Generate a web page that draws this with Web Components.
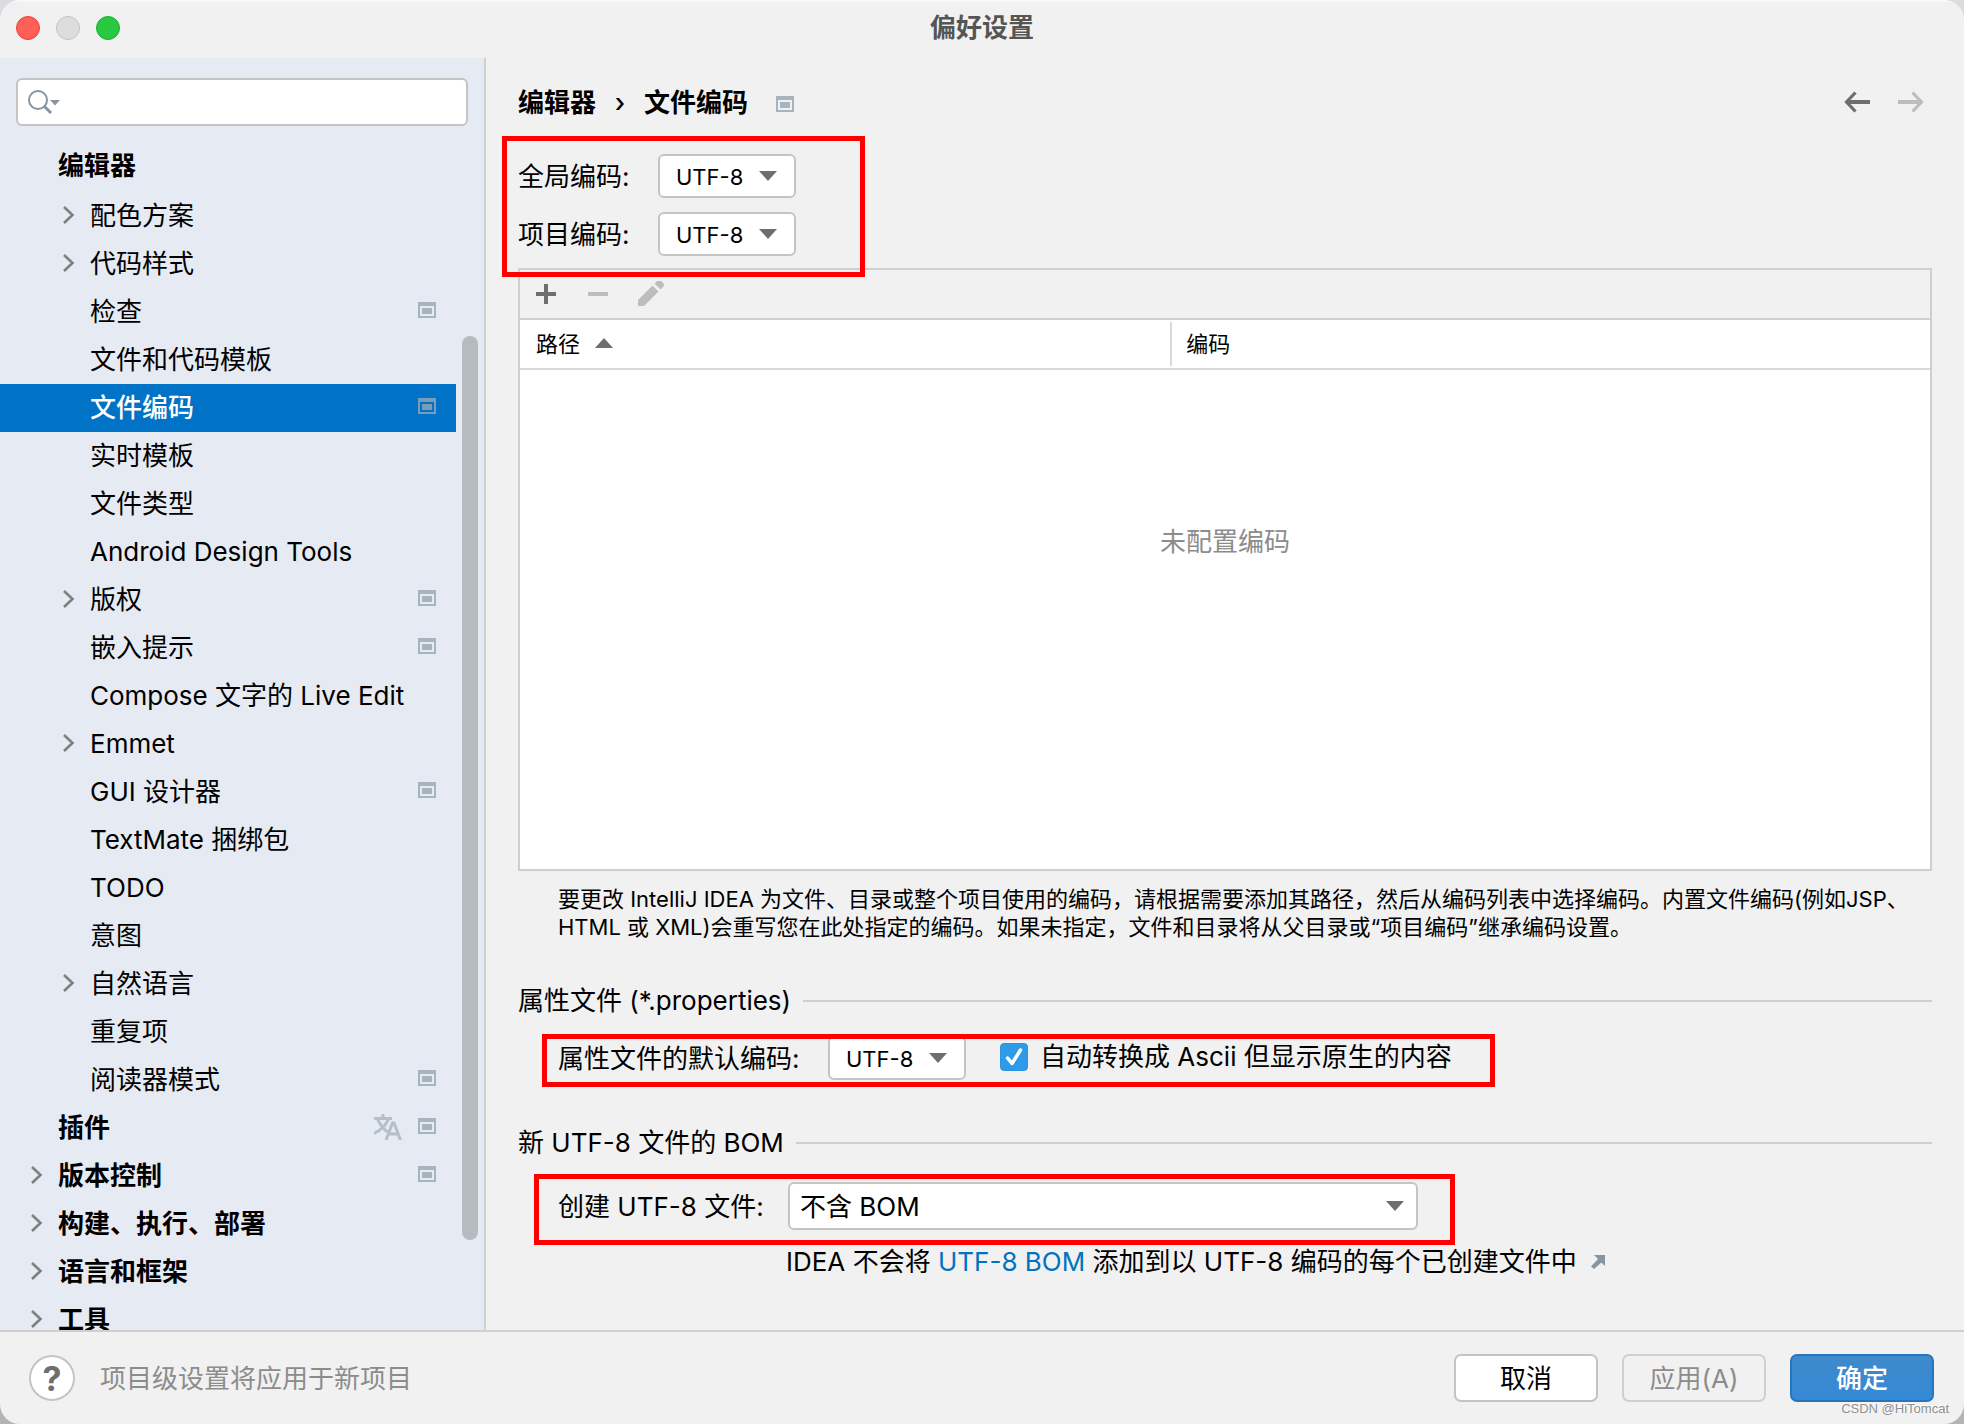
<!DOCTYPE html>
<html lang="zh-CN">
<head>
<meta charset="utf-8">
<title>偏好设置</title>
<style>
  html, body { margin: 0; height: 100%; }
  body {
    background: linear-gradient(#dcdce0, #b4b4b4);
    font: 26px/32px Inter, "Noto Sans CJK SC", sans-serif;
    color: #000;
  }
</style>
</head>
<body>
<prefs-dialog></prefs-dialog>
<script>
const define = (name, html, setup) => {
  const template = document.createElement('template');
  template.innerHTML = html;
  customElements.define(name, class extends HTMLElement {
    constructor() {
      super();
      this.attachShadow({ mode: 'open' }).append(template.content.cloneNode(true));
    }
    connectedCallback() {
      if (setup && !this.ready) { this.ready = true; setup(this, this.shadowRoot); }
    }
  });
};

// Marks a setting that is stored per project
define('project-badge', `
<style>
  :host { display: block; width: 18px; height: 16px; color: #a6b4bf; }
  svg { display: block; }
</style>
<svg width="18" height="16" viewBox="0 0 18 16" fill="currentColor"><path fill-rule="evenodd" d="M0 0h18v16H0zM2 4v10h14V4z"/><path d="M4 6h10v6H4z"/></svg>`);

// Red highlight frame laid over a group of controls
define('highlight-frame', `
<style>
  :host { display: block; position: absolute; border: 5px solid #f00; pointer-events: none; z-index: 2; }
</style>`);

define('title-bar', `
<style>
  :host { display: grid; grid-template-columns: 1fr auto 1fr; align-items: center; height: 56px; padding: 0 16px 2px; box-shadow: inset 0 2px #f9f9f9; }
  .lights { display: flex; gap: 16px; }
  .lights button { width: 24px; height: 24px; padding: 0; border-radius: 50%; border: 1px solid #e2463f; background: #ff5f57; }
  .lights .min { background: #dddddd; border-color: #c3c3c3; }
  .lights .max { background: #28c840; border-color: #1fae34; }
  h1 { margin: 0; font-size: 26px; line-height: 32px; font-weight: 700; color: #555; }
</style>
<div class="lights"><button aria-label="关闭"></button><button class="min" aria-label="最小化"></button><button class="max" aria-label="缩放"></button></div>
<h1><slot></slot></h1>`);

define('search-box', `
<style>
  :host { display: flex; align-items: center; box-sizing: border-box; height: 48px; margin: 20px 16px 0; border: 2px solid #c4c4c4; border-radius: 6px; background: #fff; padding-left: 10px; }
  svg { flex: none; display: block; }
  input { flex: 1; min-width: 0; border: 0; outline: 0; background: none; font: inherit; padding: 0 8px; }
</style>
<svg width="34" height="28" viewBox="0 0 34 28" fill="none" stroke="#8795a1"><circle cx="10" cy="12" r="9" stroke-width="2"/><path d="M16 18l7 7" stroke-width="3"/><path d="M22 12h10l-5 5.500z" fill="#8795a1" stroke="none"/></svg>
<input type="text" aria-label="搜索">`);

define('tree-row', `
<style>
  :host { display: flex; align-items: center; box-sizing: border-box; height: 48px; padding: 0 20px 0 58px; }
  :host([child]) { padding-left: 90px; }
  :host([group]) { font-weight: 700; }
  :host([sticky]) { margin-bottom: 2px; }
  :host([selected]) { background: #0073c6; color: #fff; font-weight: 500; }
  .arrow { display: none; width: 12px; margin: 0 15px 2px -27px; }
  :host([expandable]) .arrow { display: block; }
  .text { flex: 1; white-space: nowrap; }
  .lang, project-badge { display: none; }
  :host([translated]) .lang { display: block; margin: 0 16px 2px 0; }
  :host([project]) project-badge { display: block; margin-bottom: 4px; }
  :host([selected]) project-badge { color: #7b9cb8; }
</style>
<svg class="arrow" width="12" height="18" viewBox="0 0 12 18" fill="none" stroke="#7f7f7f" stroke-width="2.600"><path d="M1 1l8.500 8L1 17"/></svg>
<span class="text"><slot></slot></span>
<svg class="lang" width="28" height="26" viewBox="0 0 28 26" fill="none" stroke="#b4c0c9" stroke-width="3"><path d="M0 4.500h18M9 0v4M14.500 5Q11 14 0 19.500M3.500 5Q7 13 13.500 18"/><path d="M12 26l6.500-17h1.500L26.500 26M14.500 20h9.500"/></svg>
<project-badge></project-badge>`);

define('settings-tree', `
<style>
  :host { display: flex; flex-direction: column; position: relative; box-sizing: border-box; flex: none; width: 486px; min-height: 0; overflow: hidden; background: #e6eaf2; border-right: 2px solid #cfcfcf; }
  nav { flex: 1; min-height: 0; overflow: hidden; margin: 16px 28px 0 0; }
  .thumb { position: absolute; right: 6px; top: 278px; bottom: 90px; width: 16px; border-radius: 8px; background: #b6bbbf; }
</style>
<search-box></search-box>
<nav>
  <tree-row group sticky>编辑器</tree-row>
  <tree-row child expandable>配色方案</tree-row>
  <tree-row child expandable>代码样式</tree-row>
  <tree-row child project>检查</tree-row>
  <tree-row child>文件和代码模板</tree-row>
  <tree-row child project selected>文件编码</tree-row>
  <tree-row child>实时模板</tree-row>
  <tree-row child>文件类型</tree-row>
  <tree-row child>Android Design Tools</tree-row>
  <tree-row child expandable project>版权</tree-row>
  <tree-row child project>嵌入提示</tree-row>
  <tree-row child>Compose 文字的 Live Edit</tree-row>
  <tree-row child expandable>Emmet</tree-row>
  <tree-row child project>GUI 设计器</tree-row>
  <tree-row child>TextMate 捆绑包</tree-row>
  <tree-row child>TODO</tree-row>
  <tree-row child>意图</tree-row>
  <tree-row child expandable>自然语言</tree-row>
  <tree-row child>重复项</tree-row>
  <tree-row child project>阅读器模式</tree-row>
  <tree-row group translated project>插件</tree-row>
  <tree-row group expandable project>版本控制</tree-row>
  <tree-row group expandable>构建、执行、部署</tree-row>
  <tree-row group expandable>语言和框架</tree-row>
  <tree-row group expandable>工具</tree-row>
</nav>
<div class="thumb"></div>`);

// A label and its drop-down
define('combo-field', `
<style>
  :host { display: flex; align-items: center; }
  label { flex: none; width: var(--label-width, 140px); padding-top: 2px; white-space: nowrap; }
  .box { display: grid; align-items: center; width: 138px; height: 44px; }
  :host([wide]) .box { width: 630px; height: 48px; }
  select, svg { grid-area: 1 / 1; }
  select { appearance: none; box-sizing: border-box; width: 100%; height: 100%; margin: 0; padding: 2px 40px 0 16px; border: 2px solid #c4c4c4; border-radius: 6px; background: #fff; color: #000; font: inherit; font-size: 22px; line-height: 28px; }
  :host([wide]) select { padding-left: 10px; font-size: 26px; line-height: 32px; }
  svg { justify-self: end; margin-right: 19px; pointer-events: none; }
  :host([wide]) svg { margin-right: 14px; }
</style>
<label for="field"></label>
<div class="box"><select id="field"><option></option></select><svg width="18" height="10" viewBox="0 0 18 10"><path d="M0 0h18L9 10z" fill="#6e6e6e"/></svg></div>`,
(host, root) => {
  root.querySelector('label').textContent = host.getAttribute('label');
  root.querySelector('option').textContent = host.getAttribute('value');
});

define('check-field', `
<style>
  :host { display: flex; align-items: center; gap: 12px; }
  .box { display: grid; }
  input, svg { grid-area: 1 / 1; }
  input { appearance: none; width: 28px; height: 28px; margin: 0; border-radius: 4px; border: 1px solid #b0b0b0; background: #fff; }
  input:checked { border-color: #2d93dd; background: #2e9be8; }
  svg { pointer-events: none; }
  label { white-space: nowrap; }
</style>
<span class="box"><input type="checkbox" id="box" checked><svg width="28" height="28" viewBox="0 0 28 28" fill="none" stroke="#fff" stroke-width="3.500" stroke-linecap="round" stroke-linejoin="round"><path d="M7.500 15l4.500 5.500L20.500 7"/></svg></span>
<label for="box"><slot></slot></label>`);

define('section-title', `
<style>
  :host { display: flex; align-items: center; gap: 12px; }
  h2 { margin: 0; font-size: 26px; line-height: 32px; font-weight: 400; }
  i { flex: 1; height: 2px; background: #cfcfcf; }
</style>
<h2><slot></slot></h2><i></i>`);

define('page-header', `
<style>
  :host { display: flex; align-items: center; height: 50px; font-weight: 700; }
  .sep { width: 48px; text-align: center; font-weight: 500; }
  project-badge { margin: 2px 0 0 28px; }
  .nav { display: flex; gap: 28px; margin-left: auto; padding: 0 8px 2px 0; }
  button { width: 26px; height: 22px; padding: 0; border: 0; background: none; }
  svg { display: block; }
</style>
<span>编辑器</span><span class="sep">›</span><span>文件编码</span><project-badge></project-badge>
<div class="nav">
  <button aria-label="后退"><svg width="26" height="22" viewBox="0 0 26 22" fill="none" stroke="#6e6e6e" stroke-width="4"><path d="M26 11H3" /><path d="M11.500 1.500L2.500 11l9 9.500" stroke-width="3.200"/></svg></button>
  <button aria-label="前进" disabled><svg width="26" height="22" viewBox="0 0 26 22" fill="none" stroke="#bdbdbd" stroke-width="4"><path d="M0 11h23"/><path d="M14.500 1.500l9 9.500-9 9.500" stroke-width="3.200"/></svg></button>
</div>`);

define('encoding-table', `
<style>
  :host { display: flex; flex-direction: column; min-height: 300px; border: 2px solid #cfcfcf; background: #fff; }
  .tools { display: flex; align-items: center; gap: 26px; height: 48px; padding: 0 16px 0 13px; background: #f1f1f1; border-bottom: 2px solid #cfcfcf; }
  .tools button { width: 26px; height: 26px; padding: 0; border: 0; background: none; }
  svg { display: block; }
  table { flex: 1; display: flex; flex-direction: column; }
  thead, tbody, tbody tr, td { display: block; }
  thead tr { display: flex; align-items: center; height: 48px; border-bottom: 2px solid #d9d9d9; }
  th { display: flex; align-items: center; gap: 15px; box-sizing: border-box; height: 44px; padding: 0 0 0 14px; font-size: 22px; line-height: 28px; font-weight: 400; flex: 762 0 0; border-left: 2px solid #d9d9d9; }
  th:first-child { flex: 650 0 0; border-left: 0; padding-left: 16px; }
  th svg { margin-bottom: 2px; }
  td { padding: 156px 0 0; text-align: center; color: #8c8c8c; }
</style>
<div class="tools">
  <button aria-label="添加"><svg width="26" height="26" viewBox="0 0 26 26" fill="#6e6e6e"><path d="M11 3h4v8h8v4h-8v8h-4v-8H3v-4h8z"/></svg></button>
  <button aria-label="移除" disabled><svg width="26" height="26" viewBox="0 0 26 26" fill="#bdbdbd"><path d="M3 11h20v4H3z"/></svg></button>
  <button aria-label="编辑" disabled><svg width="27" height="26" viewBox="-1 1 27 26" fill="#bdbdbd"><path d="M14.500 5.500l6 6L6 26H0v-6zM16.500 3.500L19 1q2-2 4 0l2 2q2 2 0 4l-2.500 2.500z"/></svg></button>
</div>
<table>
  <thead><tr><th scope="col">路径<svg width="18" height="10" viewBox="0 0 18 10"><path d="M0 10h18L9 0z" fill="#6e6e6e"/></svg></th><th scope="col">编码</th></tr></thead>
  <tbody><tr><td colspan="2">未配置编码</td></tr></tbody>
</table>`);

define('encoding-page', `
<style>
  :host { display: flex; flex-direction: column; flex: 1; min-width: 0; padding: 20px 32px 52px; }
  page-header { margin-bottom: 26px; }
  .global { position: relative; display: flex; flex-direction: column; gap: 14px; margin-bottom: 12px; }
  .global highlight-frame { left: -16px; top: -18px; bottom: -21px; width: 353px; }
  encoding-table { flex: 1; }
  .help { margin: 14px 0 44px 40px; font-size: 22px; line-height: 28px; }
  .row { position: relative; display: flex; align-items: center; align-self: flex-start; margin-left: 40px; }
  .props { --label-width: 270px; gap: 34px; margin-top: 19px; margin-bottom: 47px; }
  .props highlight-frame { left: -16px; right: -43px; top: -2px; bottom: -7px; }
  check-field { padding-bottom: 2px; }
  .bom { --label-width: 230px; margin-top: 23px; }
  .bom highlight-frame { left: -24px; right: -37px; top: -8px; bottom: -15px; }
  .note { display: flex; align-items: center; gap: 14px; margin: 16px 0 0 268px; }
  a { color: #0073bf; text-decoration: none; }
</style>
<page-header></page-header>
<div class="global">
  <combo-field label="全局编码:" value="UTF-8"></combo-field>
  <combo-field label="项目编码:" value="UTF-8"></combo-field>
  <highlight-frame></highlight-frame>
</div>
<encoding-table></encoding-table>
<p class="help">要更改 IntelliJ IDEA 为文件、目录或整个项目使用的编码，请根据需要添加其路径，然后从编码列表中选择编码。内置文件编码(例如JSP、<br>HTML 或 XML)会重写您在此处指定的编码。如果未指定，文件和目录将从父目录或“项目编码”继承编码设置。</p>
<section-title>属性文件 (*.properties)</section-title>
<div class="row props">
  <combo-field label="属性文件的默认编码:" value="UTF-8"></combo-field>
  <check-field>自动转换成 Ascii 但显示原生的内容</check-field>
  <highlight-frame></highlight-frame>
</div>
<section-title>新 UTF-8 文件的 BOM</section-title>
<div class="row bom">
  <combo-field wide label="创建 UTF-8 文件:" value="不含 BOM"></combo-field>
  <highlight-frame></highlight-frame>
</div>
<div class="note"><span>IDEA 不会将 <a href="#">UTF-8 BOM</a> 添加到以 UTF-8 编码的每个已创建文件中</span><svg width="14" height="14" viewBox="0 0 14 14"><path d="M3 0h11v11l-3.500-3.500L3 14 0 11.500 7 4z" fill="#8795a1"/></svg></div>`);

define('dialog-footer', `
<style>
  :host { display: flex; align-items: center; flex: none; height: 92px; padding: 0 30px 0 29px; border-top: 2px solid #cfcfcf; }
  button { box-sizing: border-box; font: inherit; padding: 2px 0 0; width: 144px; height: 48px; border: 2px solid #c4c4c4; border-radius: 7px; background: #fff; color: #000; }
  .help { width: 46px; height: 46px; border-radius: 50%; font-size: 34px; font-weight: 700; color: #6e6e6e; }
  .hint { flex: 1; margin-left: 25px; padding-top: 2px; color: #8c8c8c; }
  .actions { display: flex; gap: 24px; }
  .actions :disabled { background: none; border-color: #cfcfcf; color: #8c8c8c; }
  .actions .ok { border-color: #2675bf; background: linear-gradient(#3e8acb, #3589d6); color: #fff; font-weight: 500; }
</style>
<button class="help" aria-label="帮助">?</button>
<span class="hint">项目级设置将应用于新项目</span>
<div class="actions"><button>取消</button><button disabled>应用(A)</button><button class="ok">确定</button></div>`);

define('prefs-dialog', `
<style>
  :host { display: flex; flex-direction: column; position: relative; height: 100vh; overflow: hidden; background: #f1f1f1; border-radius: 20px; }
  title-bar { flex: none; }
  main { flex: 1; display: flex; min-height: 0; }
  .mark { position: absolute; right: 15px; bottom: 6px; font: 13px/18px "Liberation Sans", sans-serif; color: #8f8f8f; text-shadow: -1px -1px #fff; }
</style>
<title-bar>偏好设置</title-bar>
<main><settings-tree></settings-tree><encoding-page></encoding-page></main>
<dialog-footer></dialog-footer>
<span class="mark">CSDN @HiTomcat</span>`);
</script>
</body>
</html>
